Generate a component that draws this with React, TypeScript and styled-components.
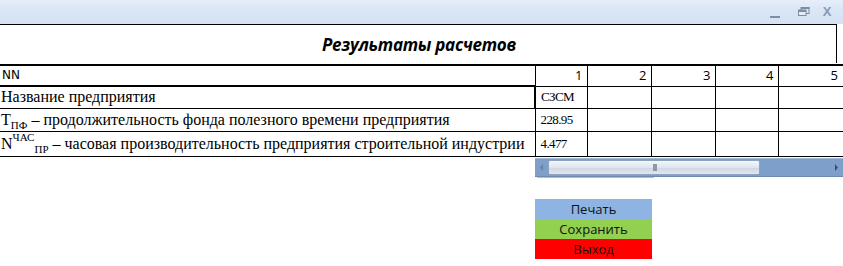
import React from 'react';
import styled, {createGlobalStyle} from 'styled-components';

type ResultRow = {
  key: string;
  label: React.ReactNode;
  values: string[];
  height: number;
};

const COLUMNS = ['1', '2', '3', '4', '5'];

function buildRows(): ResultRow[] {
  return [
    {key: 'name', label: 'Название предприятия', values: ['СЗСМ', '', '', '', ''], height: 22},
    {
      key: 'tpf',
      label: (
        <>
          Т<Sub>ПФ</Sub> – продолжительность фонда полезного времени предприятия
        </>
      ),
      values: ['228.95', '', '', '', ''],
      height: 23,
    },
    {
      key: 'nchas',
      label: (
        <>
          N<Sup>ЧАС</Sup>
          <Sub>ПР</Sub> – часовая производительность предприятия строительной индустрии
        </>
      ),
      values: ['4.477', '', '', '', ''],
      height: 25,
    },
  ];
}

function App() {
  const rows = buildRows();
  return (
    <>
      <GlobalStyle />
      <Form.Window>
        <Form.TitleBar>
          <Form.Controls>
            <Form.Minimize />
            <Form.Restore>
              <svg width="12" height="9" viewBox="0 0 12 9">
                <rect x="3" y="0.5" width="8" height="6" fill="none" stroke="#7d8da6" />
                <rect x="3" y="0" width="8.5" height="2" fill="#7d8da6" />
                <rect x="0.5" y="3" width="7.5" height="5.5" fill="#e8eef8" stroke="#7d8da6" />
                <rect x="0.5" y="3" width="7.5" height="2" fill="#7d8da6" />
              </svg>
            </Form.Restore>
            <Form.Close>X</Form.Close>
          </Form.Controls>
        </Form.TitleBar>

        <Form.Caption>Результаты расчетов</Form.Caption>

        <Grid.Table>
          <colgroup>
            <col style={{width: 535}} />
            <col style={{width: 52}} />
            <col style={{width: 64}} />
            <col style={{width: 64}} />
            <col style={{width: 63}} />
            <col />
          </colgroup>
          <tbody>
            <Grid.Row $h={21}>
              <Grid.HeadLabel>NN</Grid.HeadLabel>
              {COLUMNS.map((c) => (
                <Grid.Number key={c}>{c}</Grid.Number>
              ))}
            </Grid.Row>
            {rows.map((row, rIdx) => (
              <Grid.Row key={row.key} $h={row.height}>
                <Grid.Label>{row.label}</Grid.Label>
                {row.values.map((v, idx) => (
                  <Grid.Value key={idx} $active={rIdx === 0 && idx === 0}>
                    {v}
                  </Grid.Value>
                ))}
              </Grid.Row>
            ))}
          </tbody>
        </Grid.Table>

        <Scroll.Bar>
          <Scroll.Arrow>
            <svg width="3" height="7" viewBox="0 0 3 7">
              <path d="M3 0 L0 3.5 L3 7 Z" fill="#6d7f99" />
            </svg>
          </Scroll.Arrow>
          <Scroll.Thumb>
            <Scroll.Grip />
          </Scroll.Thumb>
          <Scroll.Track />
          <Scroll.Arrow>
            <svg width="3" height="7" viewBox="0 0 3 7">
              <path d="M0 0 L3 3.5 L0 7 Z" fill="#3e4d66" />
            </svg>
          </Scroll.Arrow>
        </Scroll.Bar>
        <Scroll.Shadow />

        <Actions.Stack>
          <Actions.Button $bg="#8db4e2">Печать</Actions.Button>
          <Actions.Button $bg="#92d050">Сохранить</Actions.Button>
          <Actions.Button $bg="#ff0000">Выход</Actions.Button>
        </Actions.Stack>
      </Form.Window>
    </>
  );
}

export default App;

const GlobalStyle = createGlobalStyle`
  html, body {
    margin: 0;
    padding: 0;
    background: #ffffff;
  }
`;

const Sub = styled.sub`
  font-size: 11px;
  vertical-align: -4px;
  line-height: 0;
`;

const Sup = styled.sup`
  font-size: 11px;
  vertical-align: 8px;
  line-height: 0;
`;

const Form = {
  Window: styled.div`
    width: 843px;
    height: 266px;
    overflow: hidden;
    background: #ffffff;
    display: flex;
    flex-direction: column;
  `,
  TitleBar: styled.div`
    height: 24px;
    flex: none;
    background: linear-gradient(to bottom, #e6eef9 0%, #dbe7f6 35%, #d3e2f4 100%);
    display: flex;
    justify-content: flex-end;
    align-items: center;
  `,
  Controls: styled.div`
    display: flex;
    align-items: center;
    padding-right: 4px;
  `,
  Minimize: styled.div`
    width: 10px;
    height: 2px;
    margin: 10px 13px 0 0;
    background: #7d8da6;
  `,
  Restore: styled.div`
    width: 22px;
    display: flex;
    justify-content: center;
    margin-top: -1px;
  `,
  Close: styled.div`
    width: 24px;
    text-align: center;
    font-family: 'Liberation Sans', Arial, sans-serif;
    font-size: 13px;
    font-weight: bold;
    color: #8a99b0;
    margin-top: -1px;
  `,
  Caption: styled.div`
    height: 39px;
    flex: none;
    width: 837px;
    border-top: 1px solid #000;
    border-right: 1px solid #000;
    display: flex;
    align-items: center;
    justify-content: center;
    font-family: 'Open Sans', sans-serif;
    font-style: italic;
    font-weight: 700;
    font-size: 17px;
    letter-spacing: -0.3px;
    color: #000;
    padding-left: 2px;
    padding-top: 1px;
    box-sizing: border-box;
    position: relative;
    &::after {
      content: '';
      position: absolute;
      left: 0;
      bottom: -3px;
      width: 843px;
      height: 2px;
      background: #000;
    }
  `,
};

const Grid = {
  Table: styled.table`
    margin-top: 2px;
    width: 843px;
    border-collapse: collapse;
    table-layout: fixed;
    color: #000;
  `,
  Row: styled.tr<{$h: number}>`
    height: ${(p) => p.$h}px;
  `,
  HeadLabel: styled.td`
    padding: 0 0 0 2px;
    border-bottom: 2px solid #000;
    font-family: 'DejaVu Sans', Tahoma, sans-serif;
    font-size: 12px;
    vertical-align: middle;
  `,
  Number: styled.td`
    padding: 0 4px 0 0;
    border-left: 1px solid #000;
    border-bottom: 1px solid #000;
    text-align: right;
    font-family: 'Open Sans', sans-serif;
    font-size: 13px;
    &:last-child {
      padding-right: 5px;
    }
  `,
  Label: styled.td`
    padding: 0 0 0 1px;
    border-bottom: 1px solid #000;
    font-family: 'Liberation Serif', 'Times New Roman', serif;
    font-size: 16px;
    white-space: nowrap;
    overflow: visible;
    vertical-align: middle;
  `,
  Value: styled.td<{$active: boolean}>`
    padding: 0 0 0 5px;
    border-left: ${(p) => (p.$active ? 2 : 1)}px solid #000;
    border-bottom: 1px solid #000;
    font-family: 'Liberation Serif', 'Times New Roman', serif;
    font-size: 13px;
    letter-spacing: -0.6px;
    white-space: nowrap;
  `,
};

const Scroll = {
  Bar: styled.div`
    margin-left: 535px;
    margin-top: 1px;
    width: 308px;
    height: 17px;
    flex: none;
    display: flex;
    align-items: center;
    background: #7f9fcb;
    border-top: 1px solid #9cb6da;
    border-bottom: 1px solid #6e8ab3;
  `,
  Arrow: styled.div`
    width: 13px;
    height: 100%;
    display: flex;
    align-items: center;
    justify-content: center;
    flex: none;
  `,
  Thumb: styled.div`
    width: 212px;
    height: 15px;
    flex: none;
    border: 1px solid #8ea4c2;
    border-radius: 2px;
    box-sizing: border-box;
    background: linear-gradient(to bottom, #f4f7fb 0%, #dfe6ef 50%, #cdd6e3 51%, #e0e6ee 100%);
    display: flex;
    align-items: center;
    justify-content: center;
  `,
  Grip: styled.div`
    width: 4px;
    height: 7px;
    background: #8d98a8;
    margin-left: 2px;
  `,
  Track: styled.div`
    flex: 1;
  `,
  Shadow: styled.div`
    margin-left: 537px;
    width: 117px;
    height: 1px;
    flex: none;
    background: #a9bfdd;
  `,
};

const Actions = {
  Stack: styled.div`
    margin: 21px 0 0 535px;
    width: 117px;
    display: flex;
    flex-direction: column;
  `,
  Button: styled.div<{$bg: string}>`
    height: 20px;
    background: ${(p) => p.$bg};
    display: flex;
    align-items: center;
    justify-content: center;
    font-family: 'Open Sans', sans-serif;
    font-size: 13px;
    color: #111;
    cursor: default;
  `,
};
